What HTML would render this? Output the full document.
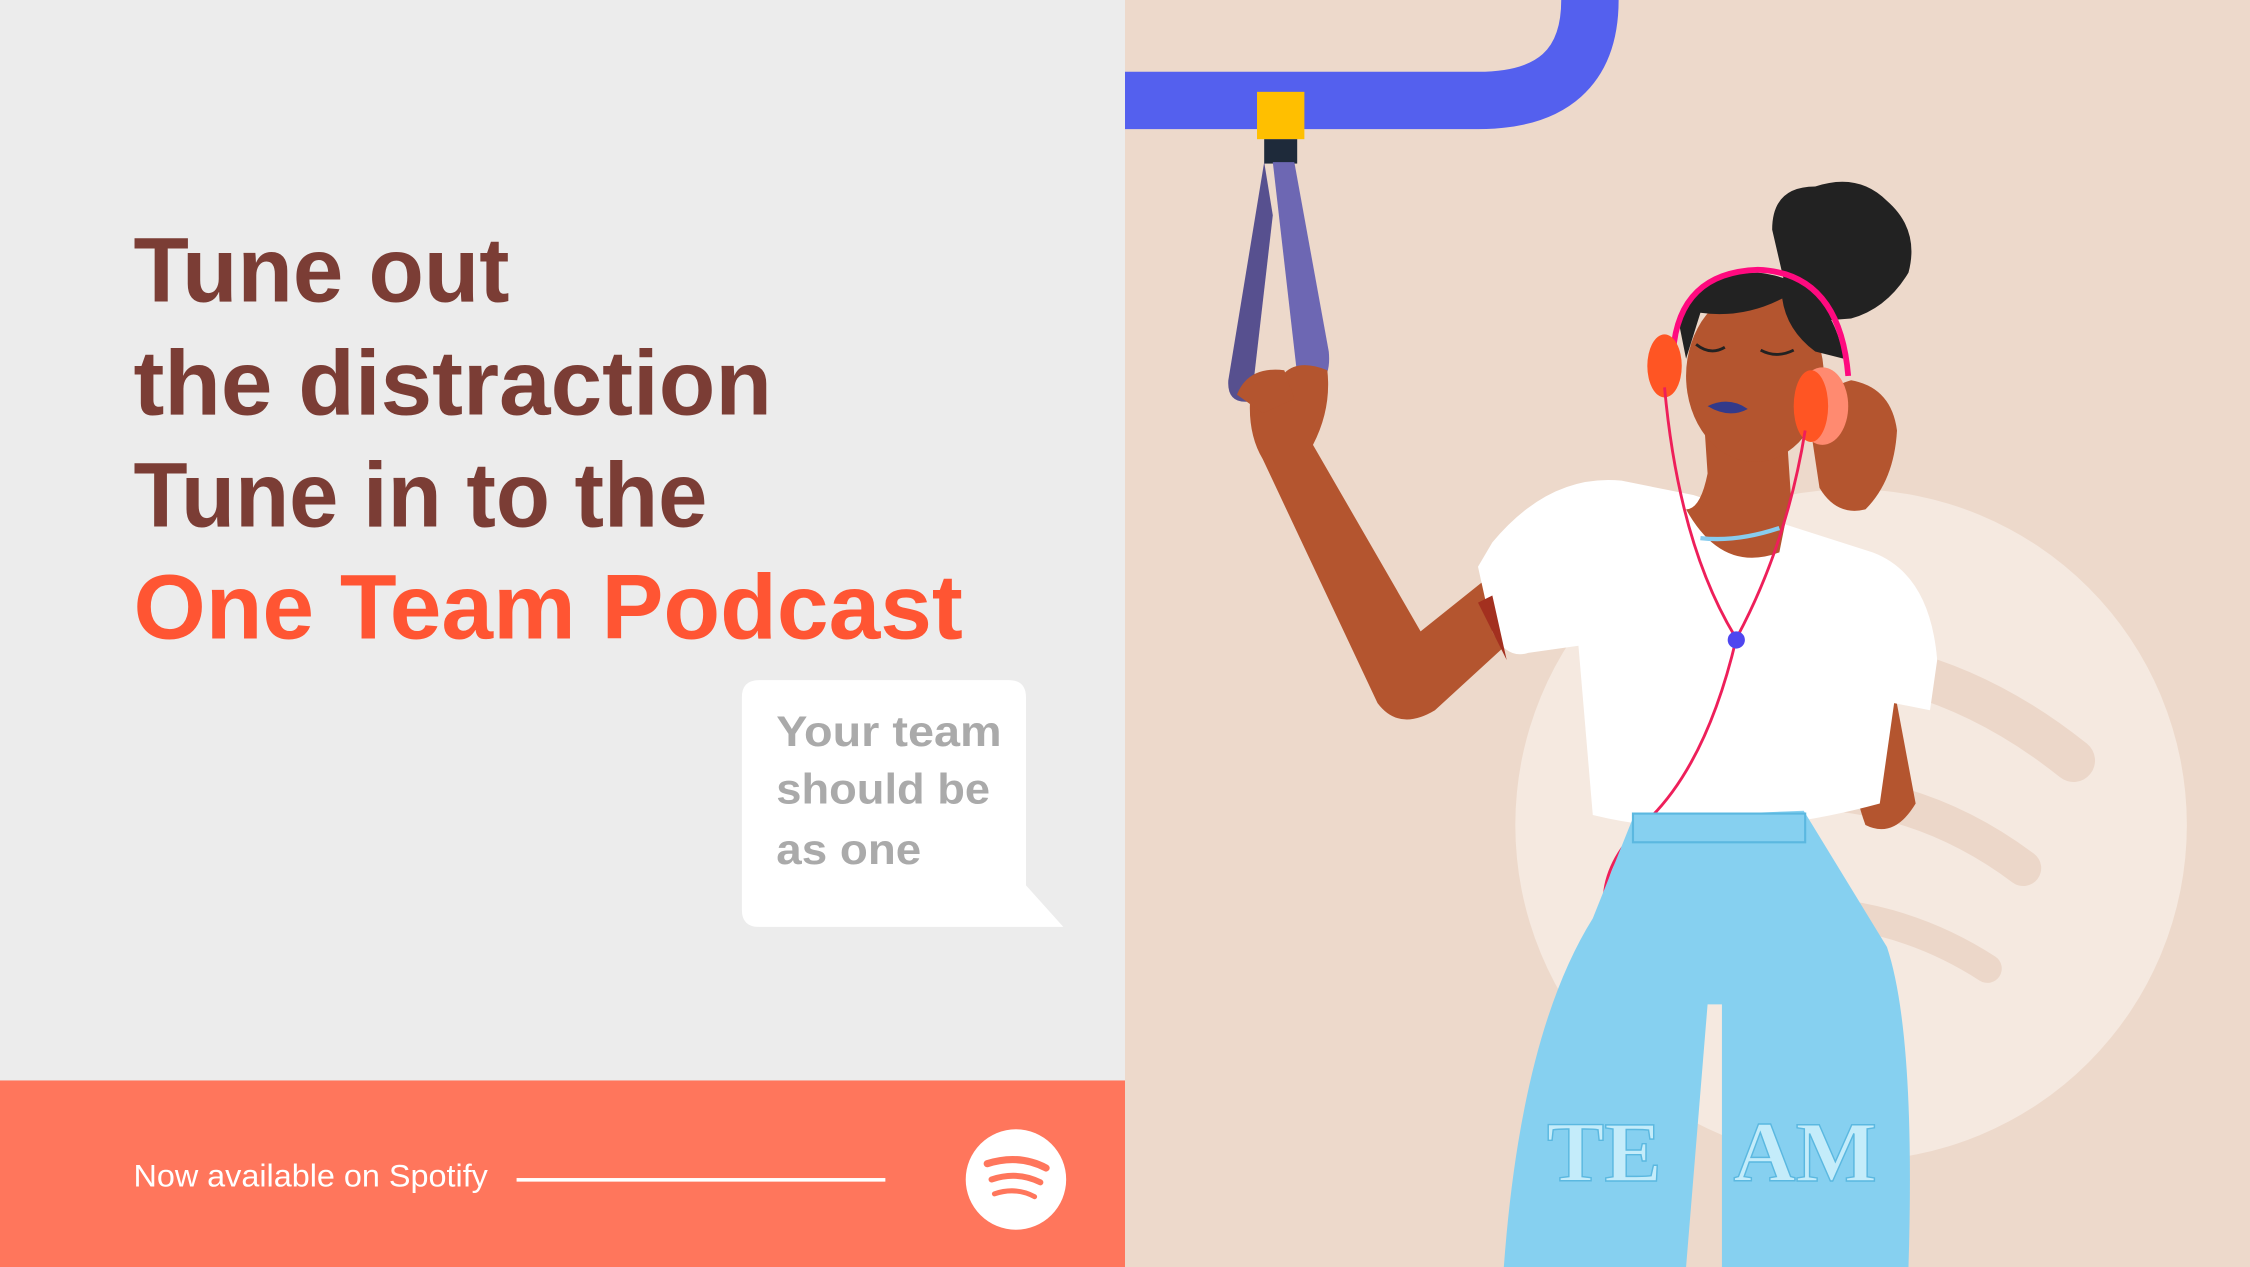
<!DOCTYPE html>
<html><head><meta charset="utf-8"><style>
html,body{margin:0;padding:0;width:2250px;height:1267px;overflow:hidden;background:#ececec}
svg{display:block}
</style></head><body>
<svg width="2250" height="1267" viewBox="0 0 1568 883" preserveAspectRatio="none" xmlns="http://www.w3.org/2000/svg" font-family="Liberation Sans, sans-serif">
<rect x="0" y="0" width="784" height="883" fill="#ececec"/>
<rect x="784" y="0" width="784" height="883" fill="#edd9cb"/>
<g font-weight="700" font-size="64" fill="#7b3d35">
<text x="93" y="210" textLength="262" lengthAdjust="spacingAndGlyphs">Tune out</text>
<text x="93" y="289" textLength="445" lengthAdjust="spacingAndGlyphs">the distraction</text>
<text x="93" y="367" textLength="400" lengthAdjust="spacingAndGlyphs">Tune in to the</text>
<text x="93" y="445" textLength="578" lengthAdjust="spacingAndGlyphs" fill="#ff5533">One Team Podcast</text>
</g>
<path d="M529,474 H703 Q715,474 715,486 V617 L741,646 H529 Q517,646 517,634 V486 Q517,474 529,474 Z" fill="#fff"/>
<g font-size="30" fill="#aaaaaa" font-weight="700">
<text x="541" y="520" textLength="157" lengthAdjust="spacingAndGlyphs">Your team</text>
<text x="541" y="560" textLength="149" lengthAdjust="spacingAndGlyphs">should be</text>
<text x="541" y="602" textLength="101" lengthAdjust="spacingAndGlyphs">as one</text>
</g>
<rect x="0" y="753" width="784" height="130" fill="#ff765c"/>
<text x="93" y="827" font-size="22" fill="#fff" textLength="247" lengthAdjust="spacingAndGlyphs">Now available on Spotify</text>
<rect x="360" y="821" width="257" height="2.5" fill="#fff"/>
<circle cx="708" cy="822" r="35" fill="#fff"/>
<g stroke="#ff765c" stroke-linecap="round" fill="none">
<path d="M688,811 Q710,804 729,814" stroke-width="5"/>
<path d="M691,822 Q709,816 725,824" stroke-width="4.2"/>
<path d="M693,832 Q708,827 721,834" stroke-width="3.5"/>
</g>
<circle cx="1290" cy="575" r="234" fill="#f5e9e0"/>
<g stroke="#ecd7c9" stroke-linecap="round" fill="none">
<path d="M1170,470 Q1320,430 1445,530" stroke-width="30"/>
<path d="M1180,560 Q1310,530 1410,605" stroke-width="25"/>
<path d="M1190,640 Q1300,620 1385,675" stroke-width="20"/>
</g>
<path d="M784,70 H1030 Q1108,70 1108,0" stroke="#5460ee" stroke-width="40" fill="none"/>
<rect x="876" y="64" width="33" height="33" fill="#ffbf00"/>
<rect x="881" y="97" width="23" height="17" fill="#1e2a3a"/>
<path d="M881,113 L856,265 Q855,280 868,280 L872,280 L887,150 Z" fill="#57508f"/>
<path d="M887,113 L902,113 L926,245 Q928,265 915,270 L905,270 Z" fill="#6d67b3"/>
<path d="M872,270 Q868,300 880,320 L960,490 Q975,510 1000,495 L1060,440 L1040,400 L990,440 L915,310 Q928,285 925,258 Q905,250 895,260 Z" fill="#b4552f"/>
<path d="M862,275 Q870,255 895,258 L902,278 L880,288 Z" fill="#b4552f"/>
<path d="M1305,400 Q1320,480 1335,560 Q1320,585 1300,575 Q1280,520 1290,420 Z" fill="#b4552f"/>
<path d="M1040,378 Q1080,330 1130,335 L1180,345 L1305,385 Q1345,400 1350,460 L1345,495 L1320,490 L1310,560 Q1200,590 1110,568 L1100,450 L1065,455 Q1050,460 1040,440 L1030,395 Z" fill="#fff"/>
<path d="M1030,420 L1050,460 L1040,415 Z" fill="#a3301f"/>
<path d="M1188,300 L1190,330 Q1185,355 1175,355 Q1200,400 1240,385 L1248,345 L1245,300 Z" fill="#b4552f"/>
<path d="M1185,375 Q1210,378 1240,368" stroke="#88ccee" stroke-width="3" fill="none"/>
<path d="M1262,300 Q1265,272 1290,265 Q1318,270 1322,300 Q1320,335 1300,355 Q1280,360 1268,340 Z" fill="#b4552f"/>
<path d="M1235,160 Q1235,130 1265,130 Q1295,120 1315,140 Q1338,160 1330,190 Q1315,215 1290,222 L1250,225 Z" fill="#222"/>
<ellipse cx="1223" cy="262" rx="48" ry="60" fill="#b4552f"/>
<path d="M1170,225 Q1185,190 1225,190 Q1275,195 1285,250 L1265,245 Q1245,230 1242,208 Q1215,222 1185,218 L1175,250 Z" fill="#222"/>
<path d="M1166,245 Q1170,190 1225,188 Q1282,190 1288,262" stroke="#ff0a7f" stroke-width="4" fill="none"/>
<ellipse cx="1160" cy="255" rx="12" ry="22" fill="#ff5523"/>
<ellipse cx="1270" cy="283" rx="18" ry="27" fill="#ff8a70"/>
<ellipse cx="1262" cy="283" rx="12" ry="25" fill="#ff5523"/>
<path d="M1190,283 Q1205,276 1218,285 Q1205,292 1190,283 Z" fill="#333a8a"/>
<g stroke="#222" stroke-width="2" fill="none">
<path d="M1182,240 Q1192,248 1202,242"/><path d="M1227,244 Q1238,250 1250,244"/>
</g>
<path d="M1160,270 Q1170,380 1210,445 Q1190,530 1150,570 Q1115,600 1118,635" stroke="#ee1f5a" stroke-width="2" fill="none"/>
<path d="M1258,300 Q1245,380 1210,445" stroke="#ee1f5a" stroke-width="2" fill="none"/>
<circle cx="1210" cy="446" r="6" fill="#4f46ef"/>
<path d="M1138,570 L1257,565 L1315,660 Q1335,720 1330,883 L1200,883 L1200,700 L1190,700 L1175,883 L1048,883 Q1060,720 1110,640 Z" fill="#86d0f0"/>
<rect x="1138" y="567" width="120" height="20" fill="#86d0f0" stroke="#5bb8e0" stroke-width="1.5"/>
<g font-family="Liberation Serif, serif" font-weight="700" font-size="60" fill="#c4ecfa" stroke="#5bb8e0" stroke-width="1">
<text x="1078" y="823">TE</text><text x="1208" y="823">AM</text>
</g>
</svg>
</body></html>
